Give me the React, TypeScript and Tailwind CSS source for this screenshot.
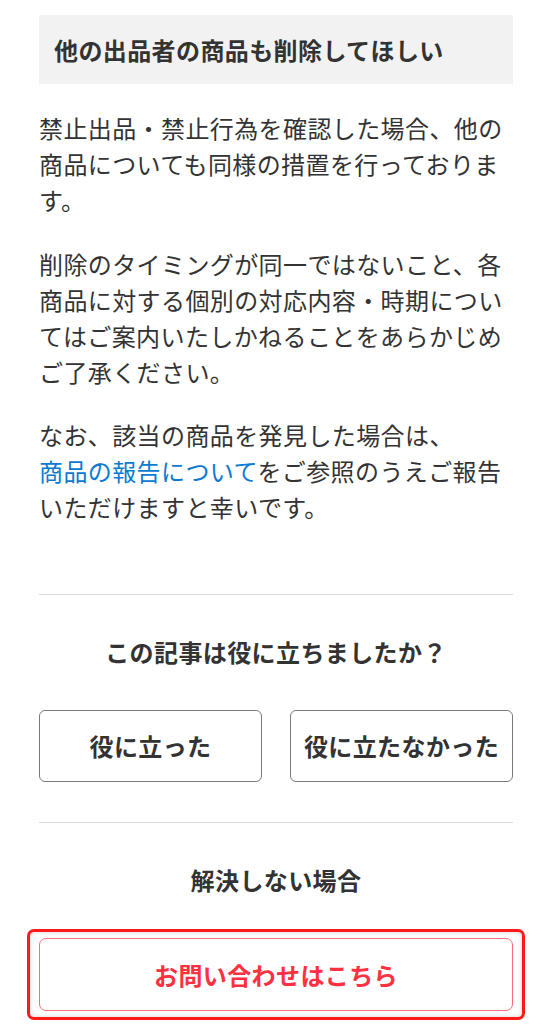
const font = { fontFamily: '"Noto Sans CJK JP", "Noto Sans", sans-serif' };

function Divider({ className = "" }: { className?: string }) {
  return <div className={`h-px bg-[#dcdcdc] ${className}`} />;
}

export default function App() {
  return (
    <div
      className="bg-white w-[552px] min-h-[1024px] px-[39px] pt-[15px] text-[#333] text-[24px] tracking-[0.4px]"
      style={font}
    >
      {/* section heading */}
      <h2 className="bg-[#f2f2f2] h-[69px] flex items-center px-[15px] font-bold leading-[36px]">
        他の出品者の商品も削除してほしい
      </h2>

      <div className="leading-[36px]">
        <p className="mt-[26px]">
          禁止出品・禁止行為を確認した場合、他の商品についても同様の措置を行っております。
        </p>
        <p className="mt-[28px]">
          削除のタイミングが同一ではないこと、各商品に対する個別の対応内容・時期についてはご案内いたしかねることをあらかじめご了承ください。
        </p>
        <p className="mt-[27px]">
          なお、該当の商品を発見した場合は、
          <br />
          <a className="text-[#0a7ad2]">商品の報告について</a>
          をご参照のうえご報告いただけますと幸いです。
        </p>
      </div>

      <Divider className="mt-[69px]" />

      {/* feedback */}
      <p className="mt-[39px] text-center font-bold leading-[36px]">
        この記事は役に立ちましたか？
      </p>
      <div className="mt-[40px] grid grid-cols-2 gap-[28px]">
        <button className="h-[72px] rounded-[6px] border border-[#7a7a7a] bg-white font-bold tracking-[0.4px]">
          役に立った
        </button>
        <button className="h-[72px] rounded-[6px] border border-[#7a7a7a] bg-white font-bold tracking-[0.4px]">
          役に立たなかった
        </button>
      </div>

      <Divider className="mt-[40px]" />

      {/* contact */}
      <p className="mt-[39px] text-center font-bold leading-[36px]">
        解決しない場合
      </p>
      <div className="mt-[31px] -mx-3 rounded-[7px] border-[3px] border-[#ff1a1a] px-[9px] py-[6px] shadow-[inset_0_0_5px_rgba(0,0,0,0.18)]">
        <button className="w-full h-[73px] rounded-[7px] border border-[#ff6b78] bg-white text-[#ff3040] font-bold tracking-[0.4px]">
          お問い合わせはこちら
        </button>
      </div>
    </div>
  );
}
